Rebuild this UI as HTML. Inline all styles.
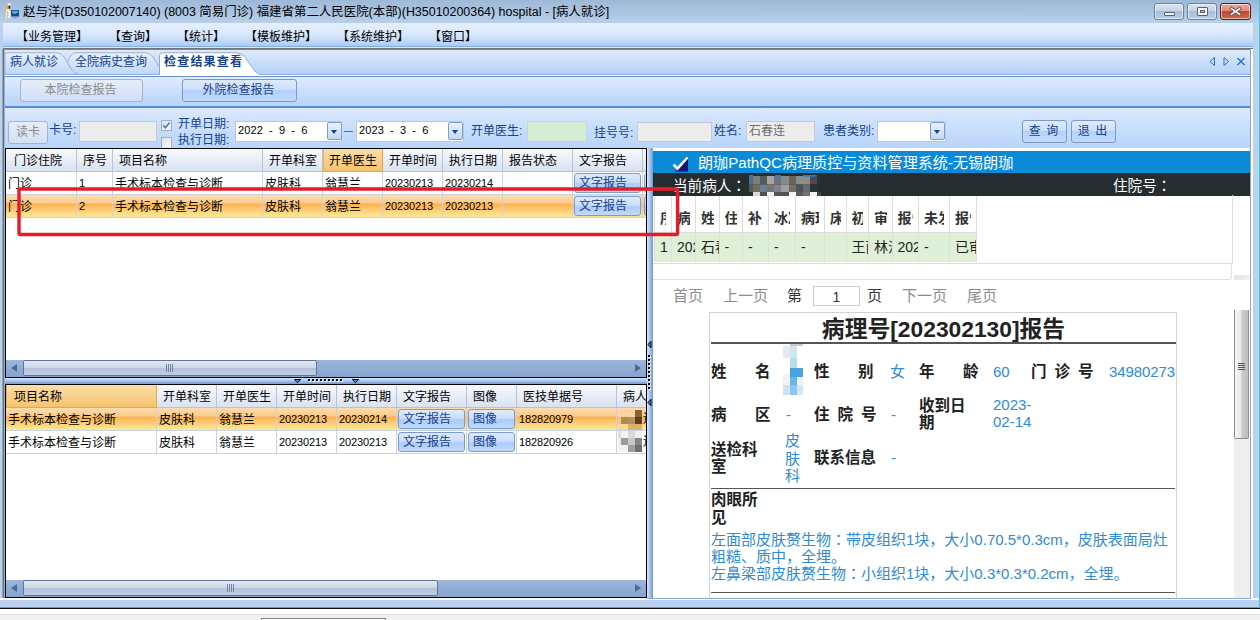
<!DOCTYPE html>
<html lang="zh-CN">
<head>
<meta charset="utf-8">
<title>病人就诊</title>
<style>
*{box-sizing:border-box;margin:0;padding:0}
html,body{width:1260px;height:620px;overflow:hidden;background:#fff}
body{position:relative;font-family:"Liberation Sans","Noto Sans CJK SC",sans-serif;font-size:12px;color:#000;line-height:1}
.abs{position:absolute}
.ui{font-family:"Liberation Sans","Noto Sans CJK SC",sans-serif;font-size:12px}
.navy{color:#15428b}
/* ---------- window frame ---------- */
#frame{left:0;top:0;width:1260px;height:608px;background:#bad2eb}
#titlebar{left:0;top:0;width:1260px;height:23px;background:linear-gradient(#9eb8d7,#b7d0ea)}
#title{left:23px;top:6px;font-size:12.45px;white-space:nowrap;color:#000}
.wbtn{top:3px;height:17px;border:1px solid #6f8299;border-radius:3px;background:linear-gradient(#d7e3f2 0%,#c3d4e9 48%,#a6bedb 50%,#b9cde6 100%);box-shadow:inset 0 0 0 1px rgba(255,255,255,.55)}
#wclose{border-color:#5a1c1c;background:linear-gradient(#eaa99b 0%,#dc8a78 48%,#c4472d 50%,#d2684b 100%)}
#menubar{left:3px;top:23px;width:1250px;height:24px;background:linear-gradient(#e5effd 0%,#dae9fc 45%,#c4dcfa 75%,#a9cbf6 100%);border-bottom:1px solid #86aee4}
.menu{top:31px;white-space:nowrap}
#grayline{left:3px;top:47px;width:1250px;height:3px;background:linear-gradient(#dce8f9 0,#dce8f9 1px,#6c6c6c 1px,#8e8e8e 3px)}
/* ---------- tab strip ---------- */
#tabstrip{left:5px;top:50px;width:1246px;height:26px;background:linear-gradient(#deeafb,#b3d1f9)}
.tabtxt{top:56px;white-space:nowrap}
#btnbar{left:5px;top:76px;width:1245px;height:32px;background:linear-gradient(#e1ecfd 0%,#cde0fb 45%,#b6d4fb 100%);border-top:1px solid #5f8fd4;border-bottom:2px solid #5a8bd0}
.btn{border:1px solid #7f99c2;border-radius:3px;background:linear-gradient(#deeafc 0%,#cfe1fb 44%,#b3d2fb 50%,#c0dafc 100%);text-align:center;white-space:nowrap}
#filterbar{left:5px;top:108px;width:1245px;height:40px;background:linear-gradient(#deeafd 0%,#cfe2fc 30%,#b8d5fb 100%)}
.lbl{white-space:nowrap}
.inp{border:1px solid #c3cad6;background:#ececec;height:21px;top:121px}
.inpw{border:1px solid #b9c8dd;background:#fff;height:21px;top:121px}
.dd{width:15px;height:18px;border:1px solid #7f9dc4;border-radius:2px;background:linear-gradient(#e8f1fd,#c3d8f5)}
.dd:after{content:"";position:absolute;left:3px;top:7px;border:3px solid transparent;border-top:4px solid #15428b;border-bottom:0}
/* ---------- grids ---------- */
.grid{background:#fff;border:1px solid #000;overflow:hidden}
.hd{position:absolute;top:0;height:23px;background:linear-gradient(#f7f9fc 0%,#e9eef7 50%,#d9e2f0 100%);border-right:1px solid #b5c4da;border-bottom:1px solid #b5c4da;padding:6px 0 0 6px;white-space:nowrap}
.hd.sel{background:linear-gradient(#fcdeaa 0%,#f9d08c 50%,#f5c36e 100%);border-right-color:#f0a43c;border-bottom-color:#f0a43c;box-shadow:inset 1px 0 0 #f2ae50}
.row{position:absolute;left:0;height:23px;width:100%}
.row.sel{background:linear-gradient(#fddcb0 0%,#fbcc8a 34%,#fcb255 40%,#fdc36c 58%,#fddb86 78%,#feea98 100%)}
.c{position:absolute;top:0;height:23px;border-right:1px solid #c7d3e6;border-bottom:1px solid #c7d3e6;padding:6px 0 0 2px;white-space:nowrap;overflow:hidden}
.num{font-size:11px;letter-spacing:-.12px;padding-top:6px !important}
.cbtn{position:absolute;top:1px;height:20px;border:1px solid #7a9cd0;border-radius:3px;background:linear-gradient(#dfeafc 0%,#cadefb 45%,#aecbf8 55%,#c0d8fb 100%);color:#15428b;text-align:left;padding:3px 0 0 4px;white-space:nowrap}
.hs{position:absolute;left:0;height:17px;width:100%;background:linear-gradient(#9cb6da,#86a4cf)}
.thumb{position:absolute;top:0;height:16px;border:1px solid #5f7797;border-radius:2px;background:linear-gradient(#e1e8f2 0%,#cbd6e6 50%,#b4c3da 52%,#c0cde1 100%)}
.grip{position:absolute;left:50%;margin-left:-4px;top:3px;width:7px;height:8px;background:repeating-linear-gradient(90deg,#7287a8 0,#7287a8 1px,transparent 1px,transparent 2px)}
.arrL,.arrR{position:absolute;top:4px;width:0;height:0;border:4px solid transparent}
.arrL{border-right:6px solid #4f6a91;border-left:0}
.arrR{border-left:6px solid #4f6a91;border-right:0}

/* ---------- right panel ---------- */
#rp{left:653px;top:148px;width:597px;height:450px;background:#fff;overflow:hidden}
.web{font-family:"Liberation Sans","Noto Sans CJK SC",sans-serif}
#rp .bluehd{position:absolute;left:0;top:3px;width:597px;height:22px;background:#0b8bd7}
#rp .darkhd{position:absolute;left:0;top:25px;width:597px;height:23px;background:#262d31}
.th,.td{position:absolute;overflow:hidden;white-space:nowrap;border-left:1px solid #ddd;font-size:14px}
.th{top:48px;height:36px;font-weight:bold;color:#333;padding:15px 5px 0 5px;background:#fff}
.clip{overflow:hidden;white-space:nowrap;height:18px}
.td{top:84px;height:30px;color:#222;background:#dff0d8;padding:7px 0 0 5px;border-top:1px solid #ddd}
.td .clip{overflow:visible}
.pg{position:absolute;top:140px;font-size:15px;color:#8c8c8c;white-space:nowrap}
.rl{position:absolute;font-size:15.5px;font-weight:bold;color:#222;white-space:nowrap;line-height:17px}
.rv{position:absolute;font-size:15px;color:#2f8bd3;white-space:nowrap;line-height:17px}
</style>
</head>
<body>
<div id="frame" class="abs"></div>
<div id="titlebar" class="abs"></div>
<div id="title" class="abs">赵与洋(D350102007140) (8003 简易门诊) 福建省第二人民医院(本部)(H35010200364) hospital - [病人就诊]</div>
<svg class="abs" style="left:4px;top:2px" width="16" height="17" viewBox="0 0 16 17"><rect x="7" y="8" width="8" height="6.5" fill="#1c4f93"/><rect x="8" y="8.8" width="6" height="2.4" fill="#35b0d8"/><rect x="8" y="11.2" width="6" height="2.4" fill="#123f86"/><path d="M9 12.5 L11 10.5 L12 12" stroke="#e9c27a" stroke-width=".8" fill="none"/><rect x="9.3" y="14.5" width="3.4" height="1.5" fill="#8a93a1"/><path d="M1.8 1.2 H6.8 V3.4 H1.8 Z" fill="#f3f0f4"/><rect x="2.2" y="1.6" width="1.3" height="1.2" fill="#e2566a"/><ellipse cx="4" cy="5.2" rx="2.2" ry="2.4" fill="#e9a549"/><rect x="4.6" y="4" width="1.6" height="2.6" fill="#2b2b33"/><path d="M1.4 8 Q4 6.6 6.4 8 L6.8 15.4 Q4 16.6 1 15.4 Z" fill="#f1eef0"/><path d="M1.4 8 L1 15.4 M3 9 Q4.5 11.5 3.4 15.8" stroke="#e6a53f" stroke-width=".9" fill="none"/><rect x="0.4" y="9.6" width="1.6" height="3.6" fill="#c9c3cf"/></svg>
<div class="abs wbtn" id="wmin" style="left:1154px;width:30px"><div class="abs" style="left:9px;top:8px;width:11px;height:4px;background:#f4f6f9;border:1px solid #56617a;border-radius:1px"></div></div>
<div class="abs wbtn" id="wmax" style="left:1187px;width:30px"><div class="abs" style="left:9px;top:3px;width:11px;height:9px;background:#f4f6f9;border:1px solid #56617a;border-radius:1px"><div class="abs" style="left:2px;top:2px;width:5px;height:3px;border:1px solid #56617a;background:#aebfd6"></div></div></div>
<div class="abs wbtn" id="wclose" style="left:1220px;width:31px"><svg class="abs" style="left:8px;top:2px" width="13" height="11" viewBox="0 0 13 11"><path d="M2.2 1 L6.5 3.9 L10.8 1 L12.4 3 L8.7 5.5 L12.4 8 L10.8 10 L6.5 7.1 L2.2 10 L0.6 8 L4.3 5.5 L0.6 3 Z" fill="#f4f4f4" stroke="#5b3a3a" stroke-width=".9"/></svg></div>
<div id="menubar" class="abs"></div>
<div class="abs menu" style="left:16px">【业务管理】</div>
<div class="abs menu" style="left:109px">【查询】</div>
<div class="abs menu" style="left:177px">【统计】</div>
<div class="abs menu" style="left:245px">【模板维护】</div>
<div class="abs menu" style="left:337px">【系统维护】</div>
<div class="abs menu" style="left:429px">【窗口】</div>
<div id="grayline" class="abs"></div>
<div id="tabstrip" class="abs"></div>
<svg class="abs" style="left:5px;top:49px" width="1246" height="28" viewBox="0 0 1246 28">
<defs><linearGradient id="tg" x1="0" y1="0" x2="0" y2="1"><stop offset="0" stop-color="#e6effb"/><stop offset="1" stop-color="#bfd7f8"/></linearGradient></defs>
<path d="M0 25.5 L0 6.5 Q0 3.7 3 3.7 L51 3.7 Q56 3.7 59 8 L66 19.5 Q69 24.5 74 25.5 Z" fill="url(#tg)" stroke="#9bb5db" stroke-width="1"/>
<path d="M62.5 13.5 Q65.5 3.7 71 3.7 L139 3.7 Q145 3.7 148 8 L155 19.5 Q158 24.5 163 25.5 L74 25.5 Q69 24.5 66 19.5 Z" fill="url(#tg)" stroke="#9bb5db" stroke-width="1"/>
<path d="M0 25.5 H1246" stroke="#8fabd6" stroke-width="1"/>
<rect x="0" y="26" width="1246" height="1" fill="#fff"/>
<path d="M154.5 27 L154.5 6.5 Q154.5 3.7 158 3.7 L230 3.7 Q236 3.7 239.5 7.3 L248 19.5 Q251 24.5 255 25.5 L255 27 Z" fill="#fff"/>
<path d="M154.5 26 L154.5 6.5 Q154.5 3.7 158 3.7 L230 3.7 Q236 3.7 239.5 7.3 L248 19.5 Q251 24.5 255 25.5" fill="none" stroke="#8fabd6" stroke-width="1"/>
</svg>
<div class="abs tabtxt navy" style="left:10px">病人就诊</div>
<div class="abs tabtxt navy" style="left:75px">全院病史查询</div>
<div class="abs tabtxt navy" style="left:164px;font-weight:bold;letter-spacing:1.2px">检查结果查看</div>
<svg class="abs" style="left:1207px;top:55px" width="42" height="13" viewBox="0 0 42 13"><path d="M7.5 2.5 L3 6.5 L7.5 10.5 Z" fill="none" stroke="#2d6bd1" stroke-width="1"/><path d="M17 2.5 L21.5 6.5 L17 10.5 Z" fill="none" stroke="#2d6bd1" stroke-width="1"/><path d="M30.5 3 L37.5 10 M37.5 3 L30.5 10" stroke="#2d6bd1" stroke-width="1.4"/></svg>
<div id="btnbar" class="abs"></div>
<div class="abs btn" style="left:20px;top:79px;width:123px;height:23px;padding-right:2px;color:#8c8c8c;border-color:#a9b4c4;background:linear-gradient(#e6eefa,#cfdff5);padding-top:4px">本院检查报告</div>
<div class="abs btn navy" style="left:182px;top:79px;width:115px;height:23px;padding-right:2px;padding-top:4px">外院检查报告</div>
<div id="filterbar" class="abs"></div>
<div class="abs btn" style="left:8px;top:121px;width:40px;height:23px;color:#8c8c8c;border-color:#a9b4c4;background:linear-gradient(#e6eefa,#d3e1f5);padding-top:4px">读卡</div>
<div class="abs lbl navy" style="left:49px;top:124px">卡号:</div>
<div class="abs inp" style="left:79px;width:78px"></div>
<div class="abs" style="left:161px;top:120px;width:11px;height:11px;border:1px solid #a3afc0;background:linear-gradient(135deg,#dfe3ea,#f4f5f7)"></div>
<svg class="abs" style="left:162px;top:121px" width="9" height="9" viewBox="0 0 9 9"><path d="M1.2 4.3 L3.4 6.8 L7.6 1.4" stroke="#4a7cc8" stroke-width="1.6" fill="none"/></svg>
<div class="abs" style="left:161px;top:137px;width:11px;height:11px;border:1px solid #a3afc0;border-bottom:0;background:linear-gradient(135deg,#dfe3ea,#f4f5f7)"></div>
<div class="abs lbl navy" style="left:178px;top:118px">开单日期:</div>
<div class="abs lbl navy" style="left:178px;top:134px">执行日期:</div>
<div class="abs inpw" style="left:235px;width:107px"></div>
<div class="abs lbl" style="left:238px;top:125px;font-size:11px;letter-spacing:.1px;word-spacing:3px">2022 - 9 - 6</div>
<div class="abs dd" style="left:327px;top:122px"></div>
<div class="abs lbl" style="left:344px;top:127px;font-size:9px">—</div>
<div class="abs inpw" style="left:356px;width:108px"></div>
<div class="abs lbl" style="left:359px;top:125px;font-size:11px;letter-spacing:.1px;word-spacing:3px">2023 - 3 - 6</div>
<div class="abs dd" style="left:448px;top:122px"></div>
<div class="abs lbl navy" style="left:471px;top:125px">开单医生:</div>
<div class="abs inp" style="left:527px;width:60px;background:#d5ecd5;border-color:#c5d6cc"></div>
<div class="abs lbl navy" style="left:594px;top:127px">挂号号:</div>
<div class="abs inp" style="left:637px;width:75px;top:122px;height:20px"></div>
<div class="abs lbl navy" style="left:714px;top:125px">姓名:</div>
<div class="abs inp" style="left:746px;width:69px"></div>
<div class="abs lbl" style="left:749px;top:125px;color:#6d6d6d">石春连</div>
<div class="abs lbl navy" style="left:823px;top:125px">患者类别:</div>
<div class="abs inpw" style="left:877px;width:69px"></div>
<div class="abs dd" style="left:930px;top:122px"></div>
<div class="abs btn navy" style="left:1022px;top:120px;width:45px;height:23px;padding:4px 2px 0 0;word-spacing:2px">查 询</div>
<div class="abs btn navy" style="left:1071px;top:120px;width:45px;height:23px;padding:4px 2px 0 0;word-spacing:2px">退 出</div>
<div class="abs grid" style="left:5px;top:148px;width:642px;height:230px">
<div class="hd" style="left:0px;width:71px;padding-left:8px">门诊住院</div>
<div class="hd" style="left:71px;width:36px">序号</div>
<div class="hd" style="left:107px;width:150px">项目名称</div>
<div class="hd" style="left:257px;width:60px">开单科室</div>
<div class="hd sel" style="left:317px;width:60px">开单医生</div>
<div class="hd" style="left:377px;width:60px">开单时间</div>
<div class="hd" style="left:437px;width:60px">执行日期</div>
<div class="hd" style="left:497px;width:70px">报告状态</div>
<div class="hd" style="left:567px;width:70px">文字报告</div>
<div class="hd" style="left:637px;width:18px"></div>
<div class="row" style="top:23px">
<div class="c" style="left:0px;width:71px">门诊</div>
<div class="c num" style="left:71px;width:36px">1</div>
<div class="c" style="left:107px;width:150px">手术标本检查与诊断</div>
<div class="c" style="left:257px;width:60px">皮肤科</div>
<div class="c" style="left:317px;width:60px">翁慧兰</div>
<div class="c num" style="left:377px;width:60px">20230213</div>
<div class="c num" style="left:437px;width:60px">20230214</div>
<div class="c" style="left:497px;width:70px"></div>
<div class="c" style="left:567px;width:70px"><div class="cbtn" style="left:1px;width:67px">文字报告</div></div>
<div class="c" style="left:637px;width:18px;border-right:0"><div class="cbtn" style="left:1px;width:40px"></div></div>
</div>
<div class="row sel" style="top:46px">
<div class="c" style="left:0px;width:71px">门诊</div>
<div class="c num" style="left:71px;width:36px">2</div>
<div class="c" style="left:107px;width:150px">手术标本检查与诊断</div>
<div class="c" style="left:257px;width:60px">皮肤科</div>
<div class="c" style="left:317px;width:60px">翁慧兰</div>
<div class="c num" style="left:377px;width:60px">20230213</div>
<div class="c num" style="left:437px;width:60px">20230213</div>
<div class="c" style="left:497px;width:70px"></div>
<div class="c" style="left:567px;width:70px"><div class="cbtn" style="left:1px;width:67px">文字报告</div></div>
<div class="c" style="left:637px;width:18px;border-right:0"><div class="cbtn" style="left:1px;width:40px"></div></div>
</div>
<div class="hs" style="top:211px"><div class="arrL" style="left:5px"></div><div class="thumb" style="left:17px;width:294px"><div class="grip"></div></div><div class="arrR" style="right:5px"></div></div>
</div>
<div class="abs grid" style="left:5px;top:384px;width:642px;height:214px">
<div class="hd sel" style="left:0px;width:151px;padding-left:8px">项目名称</div>
<div class="hd" style="left:151px;width:60px">开单科室</div>
<div class="hd" style="left:211px;width:60px">开单医生</div>
<div class="hd" style="left:271px;width:60px">开单时间</div>
<div class="hd" style="left:331px;width:60px">执行日期</div>
<div class="hd" style="left:391px;width:70px">文字报告</div>
<div class="hd" style="left:461px;width:50px">图像</div>
<div class="hd" style="left:511px;width:100px">医技单据号</div>
<div class="hd" style="left:611px;width:84px">病人姓名</div>
<div class="row sel" style="top:23px">
<div class="c" style="left:0px;width:151px">手术标本检查与诊断</div>
<div class="c" style="left:151px;width:60px">皮肤科</div>
<div class="c" style="left:211px;width:60px">翁慧兰</div>
<div class="c num" style="left:271px;width:60px">20230213</div>
<div class="c num" style="left:331px;width:60px">20230214</div>
<div class="c" style="left:391px;width:70px"><div class="cbtn" style="left:1px;width:67px">文字报告</div></div>
<div class="c" style="left:461px;width:50px"><div class="cbtn" style="left:1px;width:47px">图像</div></div>
<div class="c num" style="left:511px;width:100px">182820979</div>
<div class="c" style="left:611px;width:84px;border-right:0;padding:0"><svg style="position:absolute;left:1px;top:0" width="24" height="22" viewBox="0 0 24 22"><rect x="0" y="2" width="17" height="7" fill="#fbd3a0"/><rect x="17" y="2" width="7" height="7" fill="#8a6238"/><rect x="0" y="9" width="3" height="7" fill="#f5c68c"/><rect x="3" y="9" width="7" height="7" fill="#b08a4e"/><rect x="10" y="9" width="7" height="7" fill="#b59158"/><rect x="17" y="9" width="7" height="7" fill="#5e3f1e"/><rect x="0" y="16" width="10" height="6" fill="#fcd98a"/><rect x="10" y="16" width="7" height="6" fill="#d8b566"/><rect x="17" y="16" width="7" height="6" fill="#d4b36a"/></svg><span style="position:absolute;left:26px;top:5px">连</span></div>
</div>
<div class="row" style="top:46px">
<div class="c" style="left:0px;width:151px">手术标本检查与诊断</div>
<div class="c" style="left:151px;width:60px">皮肤科</div>
<div class="c" style="left:211px;width:60px">翁慧兰</div>
<div class="c num" style="left:271px;width:60px">20230213</div>
<div class="c num" style="left:331px;width:60px">20230213</div>
<div class="c" style="left:391px;width:70px"><div class="cbtn" style="left:1px;width:67px">文字报告</div></div>
<div class="c" style="left:461px;width:50px"><div class="cbtn" style="left:1px;width:47px">图像</div></div>
<div class="c num" style="left:511px;width:100px">182820926</div>
<div class="c" style="left:611px;width:84px;border-right:0;padding:0"><svg style="position:absolute;left:1px;top:0" width="24" height="22" viewBox="0 0 24 22"><rect x="0" y="0" width="3" height="7" fill="#dedede"/><rect x="3" y="0" width="7" height="7" fill="#f4f4f6"/><rect x="10" y="0" width="7" height="7" fill="#d9d9d9"/><rect x="17" y="0" width="7" height="7" fill="#f0f0f0"/><rect x="0" y="7" width="3" height="7" fill="#eeeeee"/><rect x="3" y="7" width="7" height="7" fill="#9a9a9a"/><rect x="10" y="7" width="7" height="7" fill="#c8c8c8"/><rect x="17" y="7" width="7" height="7" fill="#858585"/><rect x="0" y="14" width="10" height="7" fill="#f2f2f2"/><rect x="10" y="14" width="7" height="7" fill="#9e9e9e"/><rect x="17" y="14" width="7" height="7" fill="#6e6e6e"/></svg><span style="position:absolute;left:26px;top:5px">连</span></div>
</div>
<div class="hs" style="top:195px"><div class="arrL" style="left:5px"></div><div class="thumb" style="left:17px;width:415px"><div class="grip"></div></div><div class="arrR" style="right:5px"></div></div>
</div>
<div id="rp" class="abs web">
<div class="bluehd"></div>
<div class="darkhd"></div>
<svg style="position:absolute;left:19px;top:8px" width="17" height="16" viewBox="0 0 17 16"><path d="M16 2.5 L16 15.5 L3 15.5 Z" fill="#14177a"/><path d="M1.5 8.5 L5.5 12.5 L15.5 1.5" stroke="#fff" stroke-width="2.6" fill="none"/></svg>
<div style="position:absolute;left:45px;top:7px;font-size:15.1px;color:#fff;white-space:nowrap">朗珈PathQC病理质控与资料管理系统-无锡朗珈</div>
<div style="position:absolute;left:20px;top:31px;font-size:14.6px;color:#fff;white-space:nowrap">当前病人<span lang="ja" style="font-family:'Liberation Sans','Noto Sans CJK JP',sans-serif">：</span></div>
<div style="position:absolute;left:460px;top:31px;font-size:14.6px;color:#fff;white-space:nowrap">住院号<span lang="ja" style="font-family:'Liberation Sans','Noto Sans CJK JP',sans-serif">：</span></div>
<svg style="position:absolute;left:96px;top:27px" width="72" height="21" viewBox="0 0 72 21"><rect x="0" y="1" width="4" height="8.5" fill="#5a6b7a"/><rect x="4" y="1" width="7" height="8.5" fill="#7b7d7d"/><rect x="11" y="1" width="7" height="8.5" fill="#56595c"/><rect x="18" y="1" width="7" height="8.5" fill="#a5a5a5"/><rect x="25" y="1" width="7" height="8.5" fill="#6e747a"/><rect x="32" y="1" width="8" height="8.5" fill="#848a8d"/><rect x="40" y="1" width="7" height="8.5" fill="#6b6459"/><rect x="47" y="1" width="7" height="8.5" fill="#8d8d8b"/><rect x="54" y="1" width="7" height="8.5" fill="#8e8e89"/><rect x="61" y="1" width="7" height="8.5" fill="#4d4a47"/><rect x="68" y="1" width="4" height="8.5" fill="#2b3236"/><rect x="0" y="9.5" width="4" height="7.5" fill="#4f5a63"/><rect x="4" y="9.5" width="7" height="7.5" fill="#706b5e"/><rect x="11" y="9.5" width="7" height="7.5" fill="#6a7f96"/><rect x="18" y="9.5" width="7" height="7.5" fill="#74766e"/><rect x="25" y="9.5" width="7" height="7.5" fill="#82808f"/><rect x="32" y="9.5" width="8" height="7.5" fill="#a09f9f"/><rect x="40" y="9.5" width="7" height="7.5" fill="#6f6e69"/><rect x="47" y="9.5" width="7" height="7.5" fill="#4f5457"/><rect x="54" y="9.5" width="7" height="7.5" fill="#676b6f"/><rect x="61" y="9.5" width="7" height="7.5" fill="#2a3034"/><rect x="68" y="9.5" width="4" height="7.5" fill="#262d31"/><rect x="0" y="17" width="4" height="4" fill="#262d31"/><rect x="4" y="17" width="7" height="4" fill="#d9d9d9"/><rect x="11" y="17" width="7" height="4" fill="#4a4f52"/><rect x="18" y="17" width="7" height="4" fill="#efefef"/><rect x="25" y="17" width="7" height="4" fill="#50565a"/><rect x="32" y="17" width="8" height="4" fill="#4d5357"/><rect x="40" y="17" width="7" height="4" fill="#f4f4f4"/><rect x="47" y="17" width="7" height="4" fill="#555b5f"/><rect x="54" y="17" width="7" height="4" fill="#6f7477"/><rect x="61" y="17" width="7" height="4" fill="#f0f0f0"/><rect x="68" y="17" width="4" height="4" fill="#40464a"/><rect x="0" y="0" width="4" height="1.6" fill="#1e7fc4"/><rect x="26" y="0" width="6" height="1.6" fill="#1e7fc4"/><rect x="54" y="0" width="14" height="1.6" fill="#1e7fc4"/></svg>
<div style="position:absolute;left:0;top:47px;width:580px;height:69px;border:1px solid #ddd;border-left:0;border-top:0"></div>
<div style="position:absolute;left:0;top:116px;width:579px;height:16px;border:1px solid #e3e3e3;border-left:0;border-top:0;border-radius:0 0 3px 0"></div>
<div class="th" style="left:1px;width:17px"><div class="clip">序号</div></div>
<div class="td" style="left:1px;width:17px"><div class="clip">1</div></div>
<div class="th" style="left:18px;width:24px"><div class="clip">病理号</div></div>
<div class="td" style="left:18px;width:24px"><div class="clip">202302130</div></div>
<div class="th" style="left:42px;width:23.5px"><div class="clip">姓名</div></div>
<div class="td" style="left:42px;width:23.5px"><div class="clip">石春连</div></div>
<div class="th" style="left:65.5px;width:23.5px"><div class="clip">住院号</div></div>
<div class="td" style="left:65.5px;width:23.5px"><div class="clip">-</div></div>
<div class="th" style="left:89px;width:26px"><div class="clip">补充</div></div>
<div class="td" style="left:89px;width:26px"><div class="clip">-</div></div>
<div class="th" style="left:115px;width:27px"><div class="clip">冰冻</div></div>
<div class="td" style="left:115px;width:27px"><div class="clip">-</div></div>
<div class="th" style="left:142px;width:29px"><div class="clip">病理医嘱</div></div>
<div class="td" style="left:142px;width:29px"><div class="clip">-</div></div>
<div class="th" style="left:171px;width:21.5px"><div class="clip">床号</div></div>
<div class="td" style="left:171px;width:21.5px"><div class="clip"></div></div>
<div class="th" style="left:192.5px;width:22.5px"><div class="clip">初诊</div></div>
<div class="td" style="left:192.5px;width:22.5px"><div class="clip">王丽</div></div>
<div class="th" style="left:215px;width:23.5px"><div class="clip">审核</div></div>
<div class="td" style="left:215px;width:23.5px"><div class="clip">林涛</div></div>
<div class="th" style="left:238.5px;width:26.5px"><div class="clip">报告</div></div>
<div class="td" style="left:238.5px;width:26.5px"><div class="clip">2023</div></div>
<div class="th" style="left:265px;width:31px"><div class="clip">未发</div></div>
<div class="td" style="left:265px;width:31px"><div class="clip">-</div></div>
<div class="th" style="left:296px;width:26.5px"><div class="clip">报告状态</div></div>
<div class="td" style="left:296px;width:26.5px"><div class="clip">已审核</div></div>
<div style="position:absolute;left:322.5px;top:48px;width:1px;height:66px;background:#ddd"></div>
<div class="pg" style="left:20px">首页</div><div class="pg" style="left:70px">上一页</div><div class="pg" style="left:134px;color:#333">第</div>
<div style="position:absolute;left:160px;top:138px;width:47px;height:20px;border:1px solid #ccc;text-align:center;font-size:14px;color:#333;padding-top:3px">1</div>
<div class="pg" style="left:214px;color:#333">页</div><div class="pg" style="left:249px">下一页</div><div class="pg" style="left:314px">尾页</div>
<div style="position:absolute;left:56px;top:164px;width:468px;height:300px;border:1px solid #d4d4d4"></div>
<div style="position:absolute;left:58px;top:170px;width:465px;text-align:center;font-size:22.8px;font-weight:bold;color:#222;white-space:nowrap">病理号[202302130]报告</div>
<div style="position:absolute;left:58px;top:194px;width:465px;height:2px;background:#555"></div>
<div class="rl" style="left:58px;top:215px;">姓<span style="margin-left:28.5px">名</span></div>
<svg style="position:absolute;left:130px;top:196px" width="20" height="51" viewBox="0 0 20 51"><rect x="0" y="2" width="7" height="12" fill="#e4e9f4"/><rect x="7" y="0" width="7" height="14" fill="#cfe6f4"/><rect x="7" y="14" width="7" height="10" fill="#b9dcf1"/><rect x="7" y="24" width="13" height="9" fill="#4aa3e0"/><rect x="7" y="33" width="7" height="8" fill="#6ab5e6"/><rect x="14" y="33" width="6" height="8" fill="#e8f3fb"/><rect x="0" y="30" width="7" height="11" fill="#eef2f9"/><rect x="0" y="41" width="7" height="10" fill="#cfe2f3"/><rect x="7" y="41" width="7" height="10" fill="#8ec5ec"/><rect x="14" y="41" width="6" height="10" fill="#d3e8f6"/><rect x="7" y="0" width="13" height="2" fill="#c9c9c9"/></svg>
<div class="rl" style="left:161px;top:215px;">性<span style="margin-left:28.5px">别</span></div>
<div class="rv" style="left:237px;top:215px;">女</div>
<div class="rl" style="left:266px;top:215px;">年<span style="margin-left:28.5px">龄</span></div>
<div class="rv" style="left:340px;top:215px;">60</div>
<div class="rl" style="left:378px;top:215px;">门<span style="margin-left:8px">诊</span><span style="margin-left:8px">号</span></div>
<div class="rv" style="left:456px;top:215px;letter-spacing:-.1px">34980273</div>
<div class="rl" style="left:58px;top:258px;">病<span style="margin-left:28.5px">区</span></div>
<div class="rv" style="left:133px;top:258px;">-</div>
<div class="rl" style="left:161px;top:258px;">住<span style="margin-left:8px">院</span><span style="margin-left:8px">号</span></div>
<div class="rv" style="left:238px;top:258px;">-</div>
<div class="rl" style="left:266px;top:249px;">收到日<br>期</div>
<div class="rv" style="left:340px;top:248px;">2023-<br>02-14</div>
<div class="rl" style="left:58px;top:293px;">送检科<br>室</div>
<div class="rv" style="left:132px;top:284px;line-height:17.5px">皮<br>肤<br>科</div>
<div class="rl" style="left:161px;top:301px;">联系信息</div>
<div class="rv" style="left:238px;top:301px;">-</div>
<div style="position:absolute;left:58px;top:340px;width:464px;height:1px;background:#555"></div>
<div class="rl" style="left:58px;top:343px;line-height:18px">肉眼所<br>见</div>
<div class="rv" style="left:58px;top:383px;line-height:17px">左面部皮肤赘生物<span lang="ja" style="font-family:'Liberation Sans','Noto Sans CJK JP',sans-serif">：</span>带皮组织1块，大小0.70.5*0.3cm，皮肤表面局灶<br>粗糙、质中，全埋。<br>左鼻梁部皮肤赘生物<span lang="ja" style="font-family:'Liberation Sans','Noto Sans CJK JP',sans-serif">：</span>小组织1块，大小0.3*0.3*0.2cm，全埋。</div>
<div style="position:absolute;left:58px;top:444px;width:464px;height:1px;background:#555"></div>
<div style="position:absolute;left:581px;top:127px;width:16px;height:5px;background:linear-gradient(90deg,#e4e4e4,#f0f0f0)"></div>
<div style="position:absolute;left:581px;top:291px;width:16px;height:160px;background:#efefef"></div>
<div style="position:absolute;left:581px;top:162px;width:15px;height:129px;border:1px solid #8c8c8c;border-top:0;border-radius:0 0 2px 2px;background:linear-gradient(90deg,#f6f6f6 0%,#e9e9e9 42%,#cbcbcf 55%,#bdbdc2 100%)"><div style="position:absolute;left:3px;top:53px;width:7px;height:1px;background:#555;box-shadow:0 2px 0 #555,0 4px 0 #555,0 6px 0 #555"></div></div>
</div>
<div class="abs" style="left:2px;top:49px;width:1px;height:549px;background:#9aa3b0"></div>
<div class="abs" style="left:3px;top:49px;width:1px;height:549px;background:#6f6f6f"></div>
<div class="abs" style="left:4px;top:49px;width:1px;height:549px;background:#8fb4e6"></div>
<div class="abs" style="left:647px;top:148px;width:6px;height:450px;background:linear-gradient(90deg,#d9e7fb,#a8c2ea 50%,#6c98d6)"></div>
<div class="abs" style="left:5px;top:378px;width:642px;height:6px;background:linear-gradient(#d9e8fc,#a9c4ec 50%,#6e99d7)"></div>
<svg class="abs" style="left:0;top:0" width="660" height="620" viewBox="0 0 660 620">
<path d="M294.3 379.5 H300.7 L297.5 382.7 Z M352.3 379.5 H358.7 L355.5 382.7 Z" fill="#4f8be2" stroke="#000" stroke-width="1" stroke-linejoin="miter"/>
<rect x="309" y="380" width="2" height="2" fill="#fff"/><rect x="308" y="379" width="2" height="2" fill="#000"/><rect x="313" y="380" width="2" height="2" fill="#fff"/><rect x="312" y="379" width="2" height="2" fill="#000"/><rect x="317" y="380" width="2" height="2" fill="#fff"/><rect x="316" y="379" width="2" height="2" fill="#000"/><rect x="321" y="380" width="2" height="2" fill="#fff"/><rect x="320" y="379" width="2" height="2" fill="#000"/><rect x="325" y="380" width="2" height="2" fill="#fff"/><rect x="324" y="379" width="2" height="2" fill="#000"/><rect x="329" y="380" width="2" height="2" fill="#fff"/><rect x="328" y="379" width="2" height="2" fill="#000"/><rect x="333" y="380" width="2" height="2" fill="#fff"/><rect x="332" y="379" width="2" height="2" fill="#000"/><rect x="337" y="380" width="2" height="2" fill="#fff"/><rect x="336" y="379" width="2" height="2" fill="#000"/><rect x="341" y="380" width="2" height="2" fill="#fff"/><rect x="340" y="379" width="2" height="2" fill="#000"/>
<path d="M651 341.3 V347.7 L647.8 344.5 Z M651 399.3 V405.7 L647.8 402.5 Z" fill="#4f8be2" stroke="#000" stroke-width="1"/>
<rect x="649" y="356" width="2" height="2" fill="#fff"/><rect x="648" y="355" width="2" height="2" fill="#000"/><rect x="649" y="360" width="2" height="2" fill="#fff"/><rect x="648" y="359" width="2" height="2" fill="#000"/><rect x="649" y="364" width="2" height="2" fill="#fff"/><rect x="648" y="363" width="2" height="2" fill="#000"/><rect x="649" y="368" width="2" height="2" fill="#fff"/><rect x="648" y="367" width="2" height="2" fill="#000"/><rect x="649" y="372" width="2" height="2" fill="#fff"/><rect x="648" y="371" width="2" height="2" fill="#000"/><rect x="649" y="376" width="2" height="2" fill="#fff"/><rect x="648" y="375" width="2" height="2" fill="#000"/><rect x="649" y="380" width="2" height="2" fill="#fff"/><rect x="648" y="379" width="2" height="2" fill="#000"/><rect x="649" y="384" width="2" height="2" fill="#fff"/><rect x="648" y="383" width="2" height="2" fill="#000"/><rect x="649" y="388" width="2" height="2" fill="#fff"/><rect x="648" y="387" width="2" height="2" fill="#000"/>
</svg>
<div class="abs" style="left:0;top:598px;width:1260px;height:2px;background:#fff"></div>
<div class="abs" style="left:647px;top:598px;width:604px;height:1px;background:#8aa4d3"></div>
<div class="abs" style="left:0;top:600px;width:1260px;height:7px;background:#b9d1ee"></div>
<div class="abs" style="left:0;top:607px;width:1260px;height:1px;background:#25b4d6"></div>
<div class="abs" style="left:0;top:608px;width:1260px;height:1px;background:#111"></div>
<div class="abs" style="left:0;top:609px;width:1260px;height:6px;background:#fff"></div>
<div class="abs" style="left:0;top:614px;width:1260px;height:1px;background:#d7e0e9"></div>
<div class="abs" style="left:0;top:615px;width:1260px;height:5px;background:#f0f0f0"></div>
<div class="abs" style="left:261px;top:618px;width:125px;height:4px;border:1px solid #858585;background:#fff"></div>
<div class="abs" style="left:1250px;top:49px;width:1px;height:549px;background:#8aa4d3"></div>
<div class="abs" style="left:1251px;top:49px;width:2px;height:549px;background:#fff"></div>
<div class="abs" style="left:1259px;top:0;width:1px;height:608px;background:#35c4ea"></div>
<svg class="abs" style="left:16px;top:186px;overflow:visible" width="666" height="52" viewBox="0 0 666 52"><rect x="3" y="3" width="658.6" height="45.5" rx="1.5" fill="none" stroke="#e81c28" stroke-width="3.4"/></svg>
</body>
</html>
